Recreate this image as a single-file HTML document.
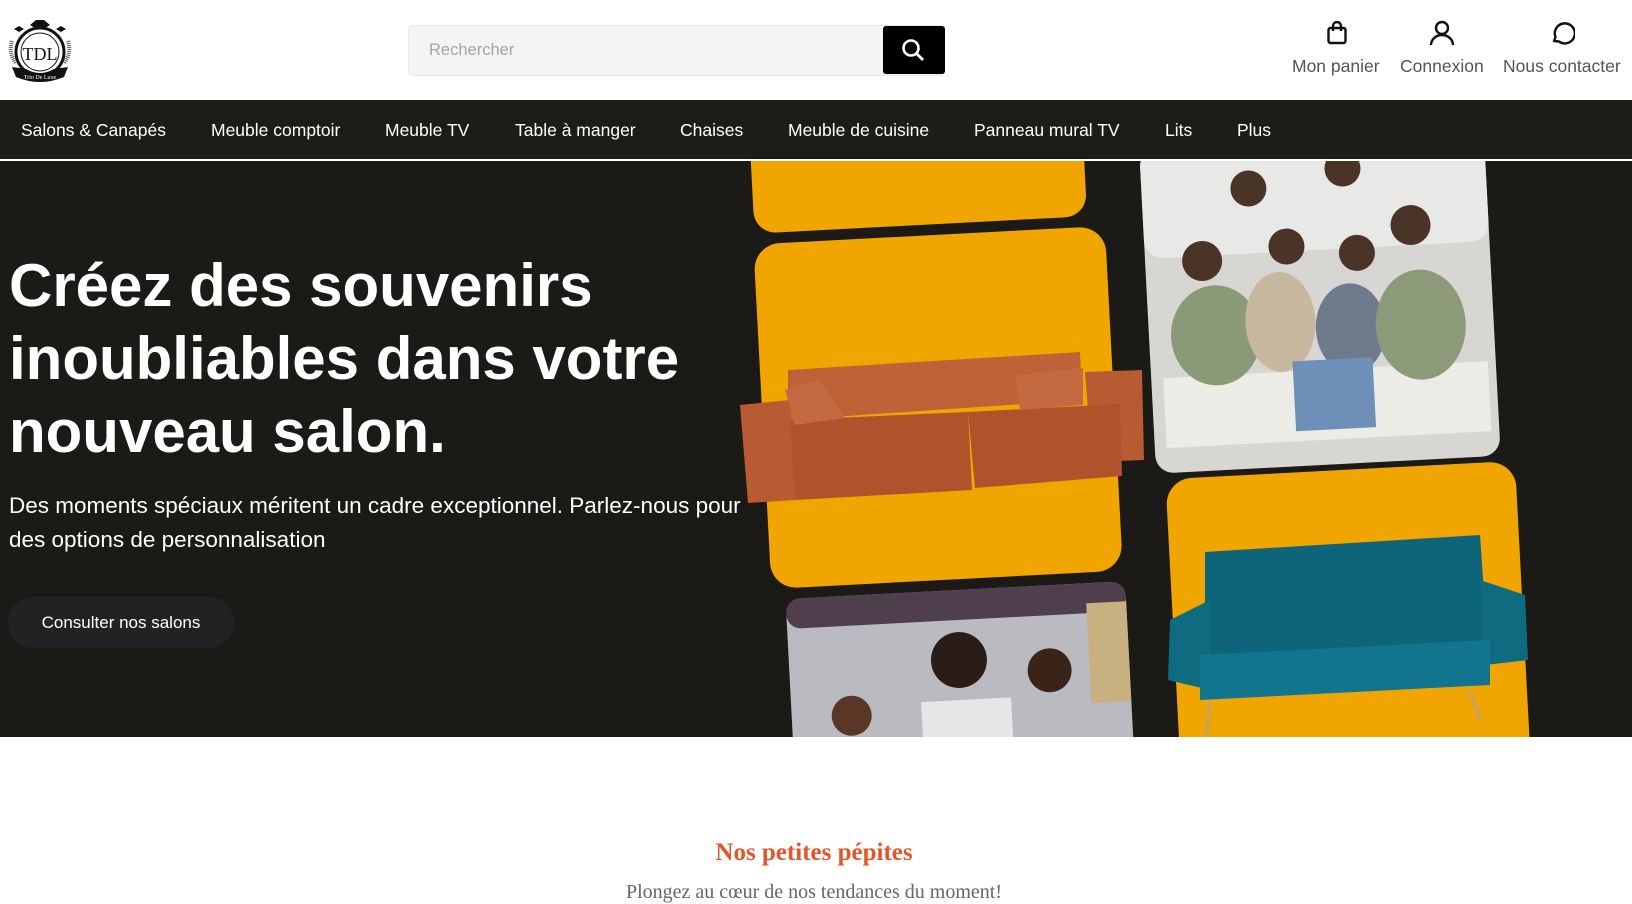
<!DOCTYPE html>
<html><head><meta charset="utf-8"><style>
*{margin:0;padding:0;box-sizing:border-box}
body{width:1632px;height:902px;overflow:hidden;background:#fff;font-family:"Liberation Sans",Arial,sans-serif;position:relative}
.abs{position:absolute}
.nav{position:absolute;top:100px;left:0;width:1632px;height:61px;background:#1e1c19;border-bottom:2px solid #fff}
.nav span{position:absolute;top:20px;color:#fff;font-size:17.5px;white-space:nowrap}
.hero{position:absolute;top:161px;left:0;width:1632px;height:576px;background:#1c1a17;overflow:hidden}
.lbl{position:absolute;top:56px;font-size:17.5px;color:#555;white-space:nowrap}
</style></head><body>
<svg class="abs" style="left:6px;top:17px" width="68" height="66" viewBox="0 0 68 66">
<path d="M24 8 L30 3 L38 3 L44 8 L34 14 Z" fill="#111"/>
<path d="M8 12 l5-3 5 3-5 3z M50 12 l5-3 5 3-5 3z" fill="#111"/>
<circle cx="34" cy="35" r="24" fill="#fff" stroke="#111" stroke-width="3"/>
<circle cx="34" cy="35" r="19" fill="none" stroke="#111" stroke-width="1"/>
<path d="M6 24 q-4 12 4 22 M62 24 q4 12-4 22" stroke="#555" stroke-width="4" fill="none" stroke-dasharray="1 1"/>
<text x="34" y="43" font-family="Liberation Serif,serif" font-size="18" text-anchor="middle" fill="#111">TDL</text>
<path d="M6 50 L20 52 Q34 60 48 52 L62 50 L58 60 Q34 70 10 60 Z" fill="#111"/>
<text x="34" y="62" font-size="6" text-anchor="middle" fill="#fff" font-family="Liberation Serif,serif">Trio De Luxe</text>
</svg>
<div class="abs" style="left:408px;top:25px;width:537px;height:51px;background:#f4f4f4;border:1px solid #e8e8e8;border-radius:5px"></div>
<div class="abs" style="left:429px;top:41px;font-size:16.5px;color:#a0a6b0">Rechercher</div>
<div class="abs" style="left:883px;top:26px;width:62px;height:48px;background:#000;border-radius:3px"></div>
<svg class="abs" style="left:901px;top:38px" width="26" height="26" viewBox="0 0 26 26"><circle cx="10" cy="10" r="7.5" stroke="#fff" stroke-width="2.6" fill="none"/><path d="M15.5 15.5 L22 22" stroke="#fff" stroke-width="2.8"/></svg>
<svg class="abs" style="left:1326px;top:21px" width="22" height="24" viewBox="0 0 22 24"><rect x="2.5" y="7" width="17" height="15" rx="2" fill="none" stroke="#111" stroke-width="2.4"/><path d="M7 10V5a4 4 0 0 1 8 0v5" fill="none" stroke="#111" stroke-width="2.4"/></svg>
<svg class="abs" style="left:1429px;top:20px" width="26" height="26" viewBox="0 0 26 26"><circle cx="13" cy="8" r="6" fill="none" stroke="#111" stroke-width="2.4"/><path d="M2 25 a11 10 0 0 1 22 0" fill="none" stroke="#111" stroke-width="2.4"/></svg>
<svg class="abs" style="left:1549px;top:20px" width="26" height="26" viewBox="0 0 26 26"><path d="M5 21 L6.5 17 A10 10 0 1 1 10 21.5 Z" fill="none" stroke="#111" stroke-width="2.4" stroke-linejoin="round"/></svg>
<div class="lbl" style="left:1292px">Mon panier</div>
<div class="lbl" style="left:1400px">Connexion</div>
<div class="lbl" style="left:1503px">Nous contacter</div>
<div class="nav">
<span style="left:21px">Salons &amp; Canapés</span>
<span style="left:211px">Meuble comptoir</span>
<span style="left:385px">Meuble TV</span>
<span style="left:515px">Table à manger</span>
<span style="left:680px">Chaises</span>
<span style="left:788px">Meuble de cuisine</span>
<span style="left:974px">Panneau mural TV</span>
<span style="left:1165px">Lits</span>
<span style="left:1237px">Plus</span>
</div>
<div class="hero">
<div class="abs" style="left:9px;top:88px;color:#fff;font-weight:bold;font-size:60px;line-height:73px;white-space:nowrap">Créez des souvenirs<br>inoubliables dans votre<br>nouveau salon.</div>
<div class="abs" style="left:9px;top:328px;color:#fff;font-size:22.5px;line-height:34px;width:745px">Des moments spéciaux méritent un cadre exceptionnel. Parlez-nous pour des options de personnalisation</div>
<div class="abs" style="left:8px;top:436px;width:226px;height:51px;background:#222224;border-radius:25px;color:#fff;font-size:17px;line-height:51px;text-align:center">Consulter nos salons</div>
<svg class="abs" style="left:0;top:0" width="1632" height="576" viewBox="0 161 1632 576">
<g fill="#f0a500">
<rect x="752" y="120" width="333" height="105" rx="22" transform="rotate(-3 918 180)"/>
<rect x="762" y="235" width="352" height="345" rx="26" transform="rotate(-3 938 405)"/>
<rect x="1172" y="470" width="350" height="330" rx="26" transform="rotate(-3 1345 600)"/>
</g>
<g transform="rotate(-3 1318 313)">
<rect x="1148" y="140" width="345" height="325" rx="18" fill="#d8d6d2"/>
<rect x="1148" y="140" width="345" height="110" rx="18" fill="#e8e8e6"/>
<rect x="1160" y="370" width="325" height="70" fill="#ecebe6"/>
<ellipse cx="1215" cy="330" rx="45" ry="50" fill="#8a9a78"/>
<ellipse cx="1280" cy="320" rx="35" ry="50" fill="#c9b8a0"/>
<ellipse cx="1350" cy="330" rx="35" ry="45" fill="#6e7b8d"/>
<ellipse cx="1420" cy="330" rx="45" ry="55" fill="#8d9a7a"/>
<rect x="1290" y="360" width="80" height="70" fill="#6d8fb8"/>
<circle cx="1205" cy="255" r="20" fill="#4a3428"/>
<circle cx="1290" cy="245" r="18" fill="#4a3428"/>
<circle cx="1360" cy="255" r="18" fill="#4a3428"/>
<circle cx="1415" cy="230" r="20" fill="#4a3428"/>
<circle cx="1255" cy="185" r="18" fill="#4a3428"/>
<circle cx="1350" cy="170" r="18" fill="#4a3428"/>
</g>
<g transform="rotate(-3 960 680)">
<rect x="790" y="590" width="340" height="200" rx="18" fill="#b9bbc0"/>
<rect x="790" y="590" width="340" height="30" rx="14" fill="#4f3f4c"/>
<rect x="1090" y="610" width="40" height="100" fill="#c8b080"/>
<circle cx="960" cy="660" r="28" fill="#2a1c16"/>
<rect x="920" y="700" width="90" height="60" fill="#e6e6e6"/>
<circle cx="850" cy="710" r="20" fill="#5a3626"/>
<circle cx="1050" cy="675" r="22" fill="#3a241a"/>
</g>
<g fill="#b85a32">
<path d="M788 370 L1080 352 L1082 400 L788 420 Z" fill="#bf6238"/>
<path d="M740 405 L790 400 L795 500 L748 503 Z"/>
<path d="M1085 372 L1142 370 L1144 460 L1092 462 Z"/>
<path d="M790 420 L968 412 L972 490 L795 500 Z" fill="#b0532c"/>
<path d="M968 412 L1120 404 L1122 476 L975 488 Z" fill="#b0532c"/>
<path d="M785 390 L820 380 L845 418 L795 425 Z" fill="#c46a40"/>
<path d="M1015 375 L1083 368 L1083 405 L1020 410 Z" fill="#c46a40"/>
</g>
<g fill="#0f6b80">
<path d="M1205 552 L1480 535 L1488 650 L1205 655 Z" fill="#0e6579"/>
<path d="M1170 620 L1210 600 L1210 690 L1168 680 Z"/>
<path d="M1480 580 L1525 595 L1528 660 L1485 665 Z"/>
<path d="M1200 655 L1490 640 L1490 685 L1200 700 Z" fill="#117590"/>
<path d="M1210 700 L1205 745 M1470 690 L1480 720" stroke="#c9a070" stroke-width="3"/>
</g>
</svg>
</div>
<div class="abs" style="left:0;top:839px;width:1628px;text-align:center;font-family:'Liberation Serif',serif;font-weight:bold;font-size:25px;color:#e5552a">Nos petites pépites</div>
<div class="abs" style="left:0;top:881px;width:1628px;text-align:center;font-family:'Liberation Serif',serif;font-size:20px;color:#666">Plongez au cœur de nos tendances du moment!</div>
</body></html>
